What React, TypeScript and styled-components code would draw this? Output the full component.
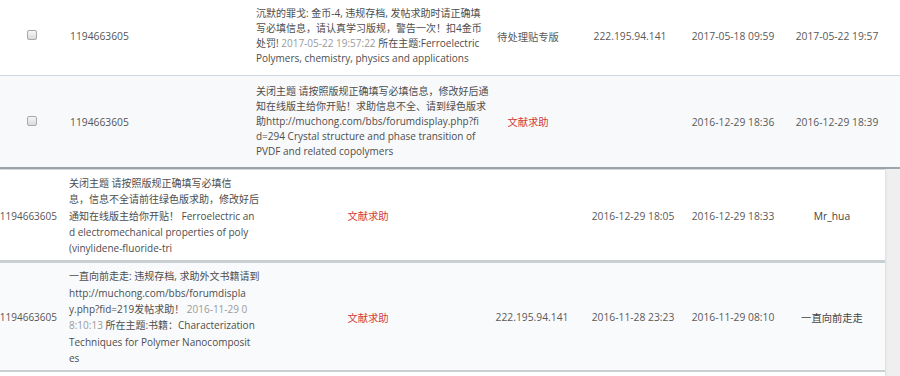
import React from "react";
import styled, { createGlobalStyle } from "styled-components";

const GlobalStyle = createGlobalStyle`
  html, body { margin: 0; padding: 0; background: #ffffff; }
  body {
    font-family: "Open Sans", "Noto Sans CJK SC", sans-serif;
    color: #555555;
  }
`;

const Page = styled.div`
  width: 900px;
  height: 376px;
  overflow: hidden;
  display: flex;
  flex-direction: column;
  background: #ffffff;
`;

const TopTable = styled.div`
  display: flex;
  flex-direction: column;
  border-bottom: 2px solid #9ea6ab;
`;

const TopRow = styled.div<{ $alt?: boolean; $last?: boolean }>`
  display: grid;
  grid-template-columns: 64px 184px 240px 80px 124px 82px 126px;
  background: ${(p) => (p.$alt ? "#f8f9fb" : "#ffffff")};
  border-bottom: ${(p) => (p.$last ? "none" : "1px solid #cfd7df")};
  padding: ${(p) => (p.$alt ? "8px 0 8px" : "6px 0 9px")};
`;

const BottomArea = styled.div`
  flex: 1;
  display: flex;
  background: #efefef;
`;

const BottomTable = styled.div`
  width: 885px;
  display: flex;
  flex-direction: column;
  background: #ffffff;
  box-shadow: 1px 0 2px rgba(0, 0, 0, 0.08);
`;

const BottomRow = styled.div<{ $alt?: boolean }>`
  display: grid;
  grid-template-columns: 61px 202px 210px 118px 84px 116px 82px 12px;
  background: ${(p) => (p.$alt ? "#f9fafc" : "#ffffff")};
  border-top: ${(p) => (p.$alt ? "3px solid #c9d0d4" : "1px solid #d3dadf")};
  border-bottom: ${(p) => (p.$alt ? "2px solid #c9d0d4" : "none")};
  padding: 5px 0 4px;
`;

const Cell = styled.div<{ $align?: "start" | "center" | "end" }>`
  display: flex;
  align-items: center;
  justify-content: ${(p) =>
    p.$align === "start" ? "flex-start" : p.$align === "end" ? "flex-end" : "center"};
  font-size: 10.3px;
  white-space: nowrap;
  min-width: 0;
`;

const IdCell = styled(Cell)<{ $pad: string; $size?: number }>`
  padding: ${(p) => p.$pad};
  font-size: ${(p) => p.$size ?? 10.3}px;
  color: #555555;
`;

const TextCell = styled(Cell)<{ $tone?: "red" | "plain" | "dark" }>`
  color: ${(p) => (p.$tone === "red" ? "#d23a3a" : p.$tone === "dark" ? "#444444" : "#595959")};
`;

const Content = styled.div<{ $lh: number; $pad: string }>`
  display: flex;
  flex-direction: column;
  justify-content: center;
  padding: ${(p) => p.$pad};
  font-size: 10px;
  line-height: ${(p) => p.$lh}px;
  color: #4d4d4d;
  white-space: nowrap;
`;

const Line = styled.span`
  display: block;
`;

const Muted = styled.span`
  color: #9a9a9a;
`;

const Check = styled.span`
  display: inline-block;
  width: 10px;
  height: 10px;
  border: 1px solid #a9a9a9;
  border-radius: 2px;
  background: linear-gradient(#f6f6f6, #dadada);
  box-sizing: border-box;
  margin-top: -2px;
`;

type Piece = string | { muted: string };
const renderLine = (parts: Piece[], i: number) => (
  <Line key={i}>
    {parts.map((p, j) =>
      typeof p === "string" ? <React.Fragment key={j}>{p}</React.Fragment> : <Muted key={j}>{p.muted}</Muted>
    )}
  </Line>
);

const topRows = [
  {
    lines: [
      ["沉默的罪戈: 金币-4, 违规存档, 发帖求助时请正确填"],
      ["写必填信息，请认真学习版规，警告一次！扣4金币"],
      ["处罚! ", { muted: "2017-05-22 19:57:22" }, " 所在主题:Ferroelectric"],
      ["Polymers, chemistry, physics and applications"],
    ] as Piece[][],
    type: "待处理贴专版",
    red: false,
    ip: "222.195.94.141",
    d1: "2017-05-18 09:59",
    d2: "2017-05-22 19:57",
  },
  {
    lines: [
      ["关闭主题 请按照版规正确填写必填信息，修改好后通"],
      ["知在线版主给你开贴！求助信息不全、请到绿色版求"],
      ["助http://muchong.com/bbs/forumdisplay.php?fi"],
      ["d=294 Crystal structure and phase transition of"],
      ["PVDF and related copolymers"],
    ] as Piece[][],
    type: "文献求助",
    red: true,
    ip: "",
    d1: "2016-12-29 18:36",
    d2: "2016-12-29 18:39",
  },
];

const bottomRows = [
  {
    lines: [
      ["关闭主题 请按照版规正确填写必填信"],
      ["息，信息不全请前往绿色版求助，修改好后"],
      ["通知在线版主给你开贴！ Ferroelectric an"],
      ["d electromechanical properties of poly"],
      ["(vinylidene-fluoride-tri"],
    ] as Piece[][],
    ip: "",
    d1: "2016-12-29 18:05",
    d2: "2016-12-29 18:33",
    name: "Mr_hua",
  },
  {
    lines: [
      ["一直向前走走: 违规存档, 求助外文书籍请到"],
      ["http://muchong.com/bbs/forumdispla"],
      ["y.php?fid=219发帖求助！ ", { muted: "2016-11-29 0" }],
      [{ muted: "8:10:13" }, " 所在主题:书籍：Characterization"],
      ["Techniques for Polymer Nanocomposit"],
      ["es"],
    ] as Piece[][],
    ip: "222.195.94.141",
    d1: "2016-11-28 23:23",
    d2: "2016-11-29 08:10",
    name: "一直向前走走",
  },
];

export default function App() {
  return (
    <>
      <GlobalStyle />
      <Page>
        <TopTable>
          {topRows.map((r, i) => (
            <TopRow key={i} $alt={i === 1} $last={i === topRows.length - 1}>
              <Cell>
                <Check />
              </Cell>
              <IdCell $align="start" $pad="0 0 0 6px">1194663605</IdCell>
              <Content $lh={15} $pad="0 8px">
                {r.lines.map(renderLine)}
              </Content>
              <TextCell $tone={r.red ? "red" : "plain"}>{r.type}</TextCell>
              <TextCell>{r.ip}</TextCell>
              <TextCell>{r.d1}</TextCell>
              <TextCell>{r.d2}</TextCell>
            </TopRow>
          ))}
        </TopTable>
        <BottomArea>
          <BottomTable>
            {bottomRows.map((r, i) => (
              <BottomRow key={i} $alt={i === 1}>
                <IdCell $align="end" $pad="0 4px 0 0" $size={10}>1194663605</IdCell>
                <Content $lh={16.3} $pad="0 8px">
                  {r.lines.map(renderLine)}
                </Content>
                <TextCell $tone="red">文献求助</TextCell>
                <TextCell>{r.ip}</TextCell>
                <TextCell>{r.d1}</TextCell>
                <TextCell>{r.d2}</TextCell>
                <TextCell $tone="dark">{r.name}</TextCell>
                <Cell />
              </BottomRow>
            ))}
          </BottomTable>
        </BottomArea>
      </Page>
    </>
  );
}
